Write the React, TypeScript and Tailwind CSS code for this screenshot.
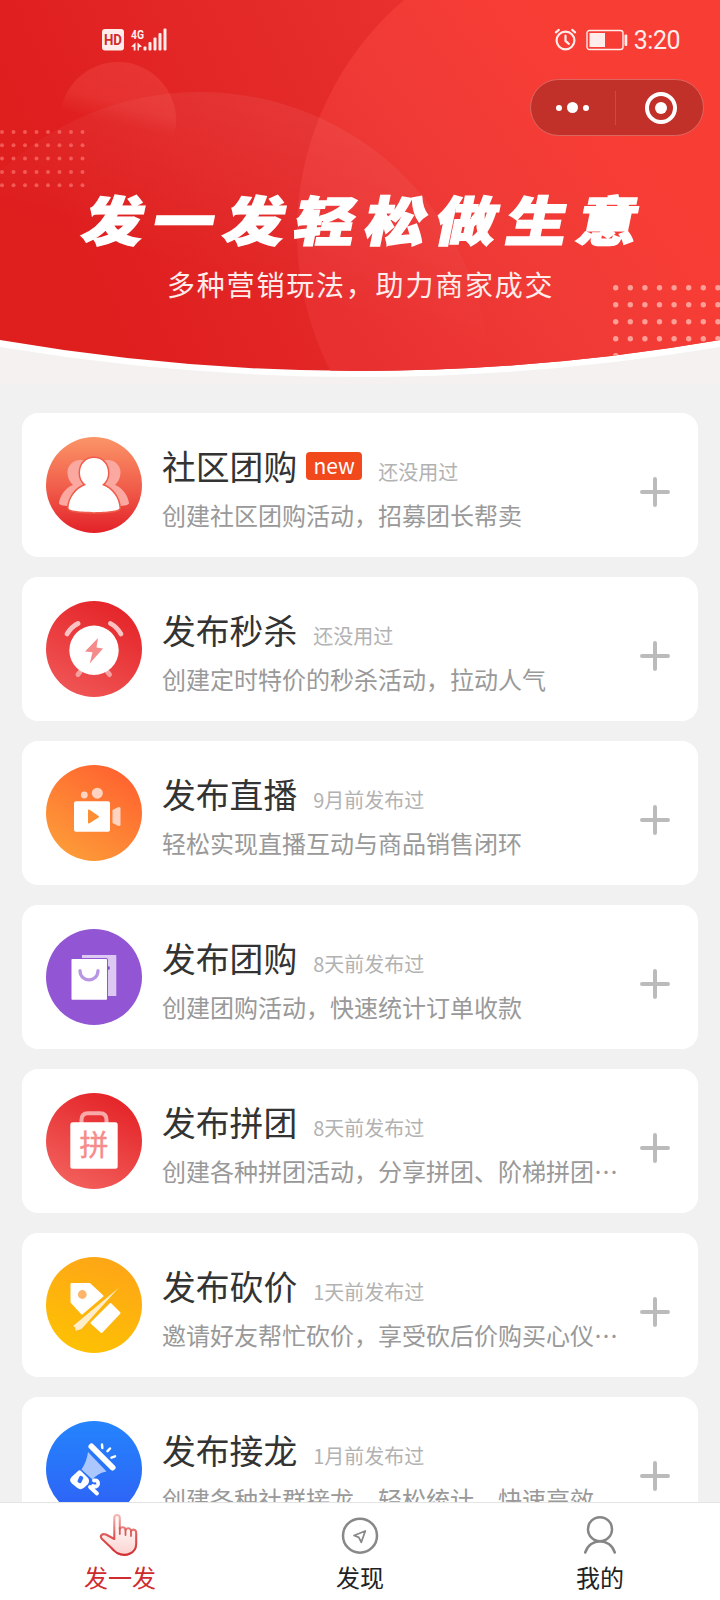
import type { ReactNode } from "react";

const range = (n: number) => Array.from({ length: n }, (_, i) => i);

const CommunityIcon = () => (
  <svg viewBox="0 0 96 96" className="h-24 w-24">
    <defs>
      <linearGradient id="community" x1="0" y1="0" x2="0" y2="1">
        <stop offset="0" stopColor="#fb9567" />
        <stop offset="0.55" stopColor="#f05b49" />
        <stop offset="1" stopColor="#e32128" />
      </linearGradient>
    </defs>
    <circle cx="48" cy="48" r="48" fill="url(#community)" />
    <g fill="#fba9a0">
      <path d="M36 23C28 22 21.500 28 21.500 35C21.500 41 24 45 27 48C19 51 14 59 13 66C13 68 17 69 24 69L48 60L46 26Z" />
      <path d="M60 23C68 22 74.500 28 74.500 35C74.500 41 72 45 69 48C77 51 82 59 83 66C83 68 79 69 72 69L48 60L50 26Z" />
    </g>
    <path
      d="M48 21C56 21 62 27 62 36C62 41 60 45 56 48C66 51 73 61 73.500 71C73.500 76.500 22.500 76.500 22.500 71C23 61 30 51 40 48C36 45 34 41 34 36C34 27 40 21 48 21Z"
      fill="#fff"
      stroke="#ef5c4b"
      strokeWidth="3"
      paintOrder="stroke"
    />
  </svg>
);

const FlashSaleIcon = () => (
  <svg viewBox="0 0 96 96" className="h-24 w-24">
    <defs>
      <linearGradient id="flash" x1="0.8" y1="0" x2="0.3" y2="1">
        <stop offset="0.1" stopColor="#e5272b" />
        <stop offset="1" stopColor="#f05555" />
      </linearGradient>
    </defs>
    <circle cx="48" cy="48" r="48" fill="url(#flash)" />
    <g fill="none" stroke="#fbc3c3" strokeWidth="4.800" strokeLinecap="round">
      <path d="M21 33Q25 26 32 22.500" />
      <path d="M64.500 22.500Q71 26 75 33" />
      <path d="M34 71L32 73.500M61.500 71L63.500 73.500" stroke="#f6a0a0" strokeWidth="5" />
    </g>
    <circle cx="48" cy="49.300" r="24.700" fill="#fff" />
    <path d="M52 37L39 50.500L46.500 51.200L43.700 62.500L57 47.500L50.500 46.500Z" fill="#f58a8a" />
  </svg>
);

const LiveIcon = () => (
  <svg viewBox="0 0 96 96" className="h-24 w-24">
    <defs>
      <linearGradient id="live" x1="0.8" y1="0.1" x2="0.25" y2="0.95">
        <stop offset="0" stopColor="#ff6530" />
        <stop offset="1" stopColor="#fd9a38" />
      </linearGradient>
    </defs>
    <circle cx="48" cy="48" r="48" fill="url(#live)" />
    <g fill="#fed3c1">
      <circle cx="38.300" cy="30" r="3.400" />
      <circle cx="51.300" cy="28.200" r="5.500" />
      <path d="M66.500 45L72.500 42Q74.500 41.500 74.500 43.500V59.500Q74.500 61.500 72.500 61L66.500 58Z" />
    </g>
    <rect x="28" y="36.300" width="36" height="30.400" rx="2" fill="#fff" />
    <path d="M43 45.500L52 51.700L43 57.500Z" fill="#fd8e34" stroke="#fd8e34" strokeWidth="2" strokeLinejoin="round" />
  </svg>
);

const GroupBuyIcon = () => (
  <svg viewBox="0 0 96 96" className="h-24 w-24">
    <circle cx="48" cy="48" r="48" fill="#9255d4" />
    <path d="M36 26H70.300V67H58V32H36Z" fill="#dcc8f3" />
    <circle cx="62" cy="39" r="2" fill="#9255d4" />
    <rect x="25.500" y="30" width="35.500" height="40.700" rx="0.800" fill="#fff" stroke="#9255d4" strokeWidth="2" paintOrder="stroke" />
    <path d="M34 41.500C34 54 52 54 52 41.500" fill="none" stroke="#b896e4" strokeWidth="3.200" strokeLinecap="round" />
  </svg>
);

const TeamIcon = () => (
  <svg viewBox="0 0 96 96" className="h-24 w-24">
    <defs>
      <linearGradient id="team" x1="0.8" y1="0" x2="0.3" y2="1">
        <stop offset="0.1" stopColor="#e5272b" />
        <stop offset="1" stopColor="#f2605c" />
      </linearGradient>
    </defs>
    <circle cx="48" cy="48" r="48" fill="url(#team)" />
    <path d="M35.500 32V27Q35.500 20.300 42 20.300H54Q60.500 20.300 60.500 27V32" fill="none" stroke="#f9a9a9" strokeWidth="4" />
    <rect x="24.300" y="29.300" width="47.400" height="46.500" rx="2.500" fill="#fff" />
    <text x="48" y="63.300" textAnchor="middle" fontSize="29" fill="#f58b8b" stroke="#f58b8b" strokeWidth="0.400">
      拼
    </text>
  </svg>
);

const BargainIcon = () => (
  <svg viewBox="0 0 96 96" className="h-24 w-24">
    <defs>
      <linearGradient id="bargain" x1="0.7" y1="0" x2="0.35" y2="1">
        <stop offset="0" stopColor="#fea517" />
        <stop offset="1" stopColor="#fdc103" />
      </linearGradient>
    </defs>
    <circle cx="48" cy="48" r="48" fill="url(#bargain)" />
    <g fill="#fff" stroke="#fff" strokeWidth="2" strokeLinejoin="round">
      <path d="M25.500 27H43.500L56.500 39L36 56.500L25.500 45Z" />
      <path d="M64.500 47L73.500 56L55.500 75L45.500 66Z" />
    </g>
    <circle cx="36.300" cy="37.500" r="4.400" fill="#fdb56b" />
    <path d="M72.500 31L27 69Q30 70 29.500 74L35.500 72Z" fill="#ffedc8" stroke="#fdb30f" strokeWidth="1.500" paintOrder="stroke" />
  </svg>
);

const ChainIcon = () => (
  <svg viewBox="0 0 96 96" className="h-24 w-24">
    <defs>
      <linearGradient id="chain" x1="0.5" y1="0" x2="0.5" y2="1">
        <stop offset="0" stopColor="#2484fd" />
        <stop offset="1" stopColor="#2f60f5" />
      </linearGradient>
    </defs>
    <circle cx="48" cy="48" r="48" fill="url(#chain)" />
    <path d="M42 31L60.500 50.500Q52 52 46.500 58.500L35.500 48.500Q41 40 42 31Z" fill="#abc7fd" />
    <g fill="none" stroke="#fff" strokeLinecap="round" strokeLinejoin="round">
      <path d="M45.500 25.500L66.500 46.500" strokeWidth="6" />
      <path d="M56 23.500L56.300 27M64 27.500L61.500 30.200M69 35.300L65.500 36.600" strokeWidth="2.500" />
      <path d="M33.500 52L40 58.500Q41 60 40 61.500L36 65Q34.500 66.500 33 65L27.500 60.500Q26 59 27.500 57.500Z" strokeWidth="5" fill="#fff" />
      <path d="M48 59.500Q53 59 52 63.500Q51 66.500 47 65M44 66L51 72.500" strokeWidth="3.800" />
    </g>
    <rect x="32.300" y="55" width="4.200" height="7" rx="1.500" fill="#3070f8" transform="rotate(25 34.400 58.500)" />
  </svg>
);

const PlusIcon = () => (
  <svg viewBox="0 0 30 30" className="h-[30px] w-[30px] shrink-0" stroke="#bbb" strokeWidth="4" strokeLinecap="round">
    <path d="M15 2V28M2 15H28" />
  </svg>
);

const HandIcon = () => (
  <svg viewBox="99 1512 42 46" className="h-[46px] w-[42px]">
    <defs>
      <linearGradient id="hand" x1="0" y1="0" x2="0" y2="1">
        <stop offset="0" stopColor="#f6b9b5" />
        <stop offset="0.5" stopColor="#dd5a58" />
        <stop offset="1" stopColor="#d22f31" />
      </linearGradient>
      <linearGradient id="palm" x1="0" y1="0" x2="0" y2="1">
        <stop offset="0.3" stopColor="#fff6f5" />
        <stop offset="1" stopColor="#fbd3d0" />
      </linearGradient>
    </defs>
    <path
      d="M114.300 1539V1518Q114.300 1515 117 1515Q119.800 1515 119.800 1518V1529Q121 1526.500 124 1527.500Q125.500 1528 125.500 1530Q127 1527.500 129.500 1528.500Q131 1529.500 131 1531Q132.500 1529 135 1530Q136.200 1531 136.200 1533V1544Q136 1551 130 1553.500Q124 1556.500 117 1553Q114 1551 111 1547.500L102 1539Q100 1536.500 101.500 1535Q103 1533.500 106 1534.500Z"
      fill="url(#palm)"
      stroke="url(#hand)"
      strokeWidth="2.100"
      strokeLinejoin="round"
    />
    <path d="M119.800 1528V1534M125.500 1530V1535M131 1531V1536" stroke="#dd5a58" strokeWidth="1.800" strokeLinecap="round" />
  </svg>
);

const CompassIcon = () => (
  <svg viewBox="340 1512 40 46" className="h-[46px] w-10" fill="none" stroke="#888">
    <circle cx="360" cy="1535.700" r="17" strokeWidth="2.500" />
    <path d="M354 1535.500L365.300 1531L361.300 1542.300L358.800 1537.300Z" strokeWidth="1.800" strokeLinejoin="round" />
  </svg>
);

const ProfileIcon = () => (
  <svg viewBox="580 1512 40 46" className="h-[46px] w-10" fill="none" stroke="#868686" strokeWidth="2.500" strokeLinecap="round">
    <circle cx="600" cy="1529.200" r="12" />
    <path d="M585.200 1552.500C590 1537.500 610 1537.500 614.800 1552.500" />
  </svg>
);

type Feature = {
  title: string;
  status: string;
  description: string;
  icon: ReactNode;
  isNew?: boolean;
};

const features: Feature[] = [
  { title: "社区团购", status: "还没用过", description: "创建社区团购活动，招募团长帮卖", icon: <CommunityIcon />, isNew: true },
  { title: "发布秒杀", status: "还没用过", description: "创建定时特价的秒杀活动，拉动人气", icon: <FlashSaleIcon /> },
  { title: "发布直播", status: "9月前发布过", description: "轻松实现直播互动与商品销售闭环", icon: <LiveIcon /> },
  { title: "发布团购", status: "8天前发布过", description: "创建团购活动，快速统计订单收款", icon: <GroupBuyIcon /> },
  { title: "发布拼团", status: "8天前发布过", description: "创建各种拼团活动，分享拼团、阶梯拼团…", icon: <TeamIcon /> },
  { title: "发布砍价", status: "1天前发布过", description: "邀请好友帮忙砍价，享受砍后价购买心仪…", icon: <BargainIcon /> },
  { title: "发布接龙", status: "1月前发布过", description: "创建各种社群接龙，轻松统计，快速高效", icon: <ChainIcon /> },
];

const tabs = [
  { label: "发一发", icon: <HandIcon />, active: true },
  { label: "发现", icon: <CompassIcon />, active: false },
  { label: "我的", icon: <ProfileIcon />, active: false },
];

const BannerArt = () => (
  <svg viewBox="0 0 720 384" className="absolute inset-0 h-full w-full">
    <defs>
      <linearGradient id="banner" x1="80" y1="260" x2="640" y2="0" gradientUnits="userSpaceOnUse">
        <stop offset="0" stopColor="#df1e1e" />
        <stop offset="0.5" stopColor="#e52c2b" />
        <stop offset="1" stopColor="#f23a33" />
      </linearGradient>
      <linearGradient id="orb" x1="330" y1="300" x2="600" y2="100" gradientUnits="userSpaceOnUse">
        <stop offset="0" stopColor="#e83031" />
        <stop offset="0.5" stopColor="#ef3a36" />
        <stop offset="1" stopColor="#f83d35" />
      </linearGradient>
      <linearGradient id="dome" x1="240" y1="92" x2="190" y2="270" gradientUnits="userSpaceOnUse">
        <stop offset="0" stopColor="#fff" stopOpacity="0.06" />
        <stop offset="1" stopColor="#fff" stopOpacity="0" />
      </linearGradient>
      <linearGradient id="moon" x1="130" y1="62" x2="114" y2="126" gradientUnits="userSpaceOnUse">
        <stop offset="0" stopColor="#ff7a70" stopOpacity="0.2" />
        <stop offset="0.65" stopColor="#ff7a70" stopOpacity="0.17" />
        <stop offset="0.95" stopColor="#ff7a70" stopOpacity="0" />
      </linearGradient>
      <clipPath id="curve">
        <path d="M0 0H720V340Q360 402 0 340Z" />
      </clipPath>
    </defs>
    <rect width="720" height="384" fill="#f4f1f0" />
    <path d="M0 0H720V347Q360 407 0 347Z" fill="#fff" />
    <g clipPath="url(#curve)">
      <rect width="720" height="384" fill="url(#banner)" />
      <circle cx="602" cy="232" r="305" fill="url(#orb)" />
      <circle cx="200" cy="382" r="290" fill="url(#dome)" />
      <circle cx="118" cy="120" r="58" fill="url(#moon)" />
      <g fill="#ff8078" fillOpacity="0.6">
        {range(40).map((i) => (
          <circle key={i} cx={2 + (i % 8) * 11.5} cy={132 + Math.floor(i / 8) * 13.3} r="2" />
        ))}
      </g>
      <g fill="#ffb0a8" fillOpacity="0.85">
        {range(40).map((i) => (
          <circle key={i} cx={615.7 + (i % 8) * 14.6} cy={287.8 + Math.floor(i / 8) * 17} r="2.700" />
        ))}
      </g>
    </g>
  </svg>
);

const StatusBar = () => (
  <div className="flex h-[79px] items-center justify-between pr-10 pl-[102px]">
    <svg viewBox="0 -8 66 40" className="h-10 w-[66px]" fill="#ffeceb">
      <rect y="1" width="22" height="21.500" rx="3" />
      <text x="11" y="17" textAnchor="middle" fontSize="14" fontWeight="700" fill="#d22a2a" fontFamily="Roboto, sans-serif" textLength="18" lengthAdjust="spacingAndGlyphs">
        HD
      </text>
      <text x="29" y="10.500" fontSize="13.500" fontWeight="700" fontFamily="Roboto, sans-serif" textLength="13" lengthAdjust="spacingAndGlyphs">
        4G
      </text>
      <path d="M33.500 14.500V22.500H31.700V18.800H29ZM35.500 14.500V22.500H37V19.500L40 18.500Z" />
      <rect x="41.500" y="18.500" width="3" height="4" rx="1" />
      <rect x="46.500" y="14" width="3" height="8.500" rx="1" />
      <rect x="51.500" y="9.500" width="3" height="13" rx="1" />
      <rect x="56.500" y="5" width="3" height="17.500" rx="1" />
      <rect x="61.500" y="0.500" width="3" height="22" rx="1" />
    </svg>
    <div className="flex items-center text-[#ffeceb]">
      <svg viewBox="0 0 24 24" className="h-[23px] w-[23px]" fill="none" stroke="currentColor" strokeWidth="2.300" strokeLinecap="round">
        <circle cx="12" cy="13" r="9.300" />
        <path d="M12 8V13.500L15.500 16.500M2 4.500L5 2M22 4.500L19 2" />
      </svg>
      <svg viewBox="0 0 42 22" className="ml-[9px] h-[22px] w-[42px]">
        <rect x="1" y="1.500" width="36" height="19" rx="2.500" fill="none" stroke="currentColor" strokeWidth="1.400" />
        <rect x="3.500" y="4" width="15.500" height="14" fill="currentColor" />
        <rect x="38.500" y="5.500" width="2.800" height="11.500" rx="1" fill="currentColor" />
      </svg>
      <span className="ml-1.5 pt-px font-[Roboto] text-[25px] leading-none tracking-[-0.500px]">3:20</span>
    </div>
  </div>
);

const MenuCapsule = () => (
  <div className="mr-4 ml-auto flex h-[57px] w-[174px] items-center rounded-full border border-[#dd6661] bg-[#c1312a]">
    <div className="flex flex-1 items-center justify-center gap-[5px]">
      <span className="h-1.5 w-1.5 rounded-full bg-white" />
      <span className="h-[11px] w-[11px] rounded-full bg-white" />
      <span className="h-1.5 w-1.5 rounded-full bg-white" />
    </div>
    <span className="h-[34px] w-px bg-[#cf4841]" />
    <div className="flex flex-1 justify-center pl-1">
      <span className="flex h-8 w-8 items-center justify-center rounded-full border-4 border-white">
        <span className="h-3 w-3 rounded-full bg-white" />
      </span>
    </div>
  </div>
);

const Banner = () => (
  <header className="relative h-[384px] shrink-0">
    <BannerArt />
    <div className="relative">
      <StatusBar />
      <MenuCapsule />
      <h1 className="mt-[50px] -skew-x-10 scale-y-[0.87] pl-[84px] text-[61px] leading-[64px] font-black tracking-[9.700px] whitespace-nowrap text-white [-webkit-text-stroke:1.800px_white]">
        发一发轻松做生意
      </h1>
      <p className="mt-4 pl-[167px] text-[28px] leading-[36px] tracking-[1.800px] text-[#ffeceb]">多种营销玩法，助力商家成交</p>
    </div>
  </header>
);

const FeatureCard = ({ feature }: { feature: Feature }) => (
  <article className="flex h-36 shrink-0 items-start rounded-2xl bg-white pt-6 pr-7 pl-6">
    {feature.icon}
    <div className="ml-5 min-w-0 flex-1">
      <div className="flex h-[58px] items-center whitespace-nowrap">
        <h2 className="text-[33.800px] leading-none text-[#333]">{feature.title}</h2>
        {feature.isNew && (
          <span className="ml-[9px] flex h-7 w-14 items-center justify-center rounded bg-[#f1481c] pb-px text-[21px] leading-none text-white">new</span>
        )}
        <span className="ml-4 pt-3 text-[20px] leading-none text-[#b2b2b2]">{feature.status}</span>
      </div>
      <p className="mt-[7px] text-[24px] leading-[26px] whitespace-nowrap text-[#999]">{feature.description}</p>
    </div>
    <div className="mt-10">
      <PlusIcon />
    </div>
  </article>
);

const TabBar = () => (
  <nav className="flex h-[98px] shrink-0 border-t border-[#e4e4e4] bg-white">
    {tabs.map((tab) => (
      <button key={tab.label} className="flex flex-1 flex-col items-center pt-[9px]">
        {tab.icon}
        <span className={tab.active ? "mt-[5px] text-[24px] leading-7 text-[#cf2a2d]" : "mt-[5px] text-[24px] leading-7 text-[#222]"}>{tab.label}</span>
      </button>
    ))}
  </nav>
);

export default function App() {
  return (
    <div lang="zh-CN" className="flex h-[1600px] w-[720px] flex-col overflow-hidden bg-[#f1f1f1] font-['Noto_Sans_CJK_SC',sans-serif]">
      <Banner />
      <main className="flex min-h-0 flex-1 flex-col gap-5 overflow-hidden px-[22px] pt-[29px]">
        {features.map((feature) => (
          <FeatureCard key={feature.title} feature={feature} />
        ))}
      </main>
      <TabBar />
    </div>
  );
}
